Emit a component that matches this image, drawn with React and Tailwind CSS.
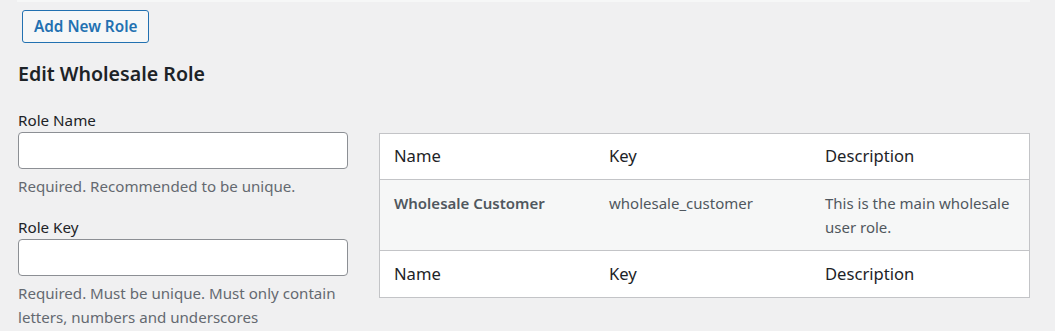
export default function App() {
  const font = { fontFamily: '"Noto Sans", "Open Sans", sans-serif' };
  const cols = "grid grid-cols-[215px_216px_1fr]";
  return (
    <div className="min-h-screen bg-[#f0f0f1] text-[#1d2327]" style={font}>
      <div className="pl-[17px] pr-[25px]">
        <div className="h-[2px] bg-[#f6f7f7]" />

        <button
          type="button"
          className="mt-[8px] ml-[5px] h-[33px] px-[11px] border border-[#2271b1] rounded-[3px] bg-[#f6f7f7] text-[15.3px] font-semibold text-[#2271b1] leading-none"
        >
          Add New Role
        </button>

        <h2 className="mt-[19px] ml-[1px] text-[19.6px] leading-[24px] font-semibold text-[#1d2327]">
          Edit Wholesale Role
        </h2>

        <div className="flex">
          {/* form */}
          <div className="w-[330px] ml-[1px] shrink-0">
            <label className="block mt-[24px] text-[15.2px] leading-[20px]">Role Name</label>
            <input
              type="text"
              className="block mt-[2px] w-full h-[37px] bg-white border border-[#8c8f94] rounded-[4px]"
            />
            <p className="mt-[5px] text-[15.1px] leading-[24px] text-[#646970]">
              Required. Recommended to be unique.
            </p>

            <label className="block mt-[19px] text-[15.2px] leading-[20px]">Role Key</label>
            <input
              type="text"
              className="block mt-[2px] w-full h-[37px] bg-white border border-[#8c8f94] rounded-[4px]"
            />
            <p className="mt-[5px] text-[15.1px] leading-[24px] text-[#646970]">
              Required. Must be unique. Must only contain letters, numbers and underscores
            </p>
          </div>

          {/* roles table */}
          <div className="ml-[31px] mt-[47px] flex-1 self-start bg-white border border-[#c3c4c7]">
            <div className={`${cols} h-[46px] items-center border-b border-[#c3c4c7] text-[16.6px]`}>
              <div className="pl-[14px]">Name</div>
              <div className="pl-[14px]">Key</div>
              <div className="pl-[14px]">Description</div>
            </div>
            <div className={`${cols} h-[71px] pt-[11px] bg-[#f6f7f7] border-b border-[#c3c4c7] text-[15px] leading-[24px] text-[#50575e]`}>
              <div className="pl-[14px] font-semibold">Wholesale Customer</div>
              <div className="pl-[14px]">wholesale_customer</div>
              <div className="pl-[14px] pr-[10px]">This is the main wholesale user role.</div>
            </div>
            <div className={`${cols} h-[46px] items-center text-[16.6px]`}>
              <div className="pl-[14px]">Name</div>
              <div className="pl-[14px]">Key</div>
              <div className="pl-[14px]">Description</div>
            </div>
          </div>
        </div>
      </div>
    </div>
  );
}
